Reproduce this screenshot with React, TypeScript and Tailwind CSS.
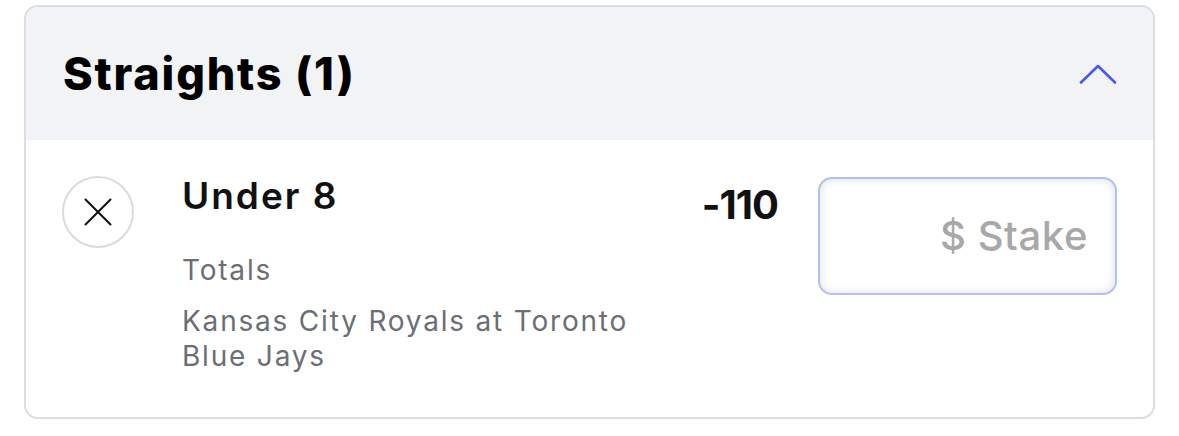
const font = { fontFamily: "Inter, 'Noto Sans', sans-serif" };

function Chevron() {
  return (
    <svg width="38" height="20" viewBox="0 0 38 20" fill="none" className="shrink-0">
      <path d="M2 18.5 L19 2 L36 18.5" stroke="#4359ef" strokeWidth="2.6" strokeLinecap="round" strokeLinejoin="round" />
    </svg>
  );
}

function CloseIcon() {
  return (
    <svg width="28" height="28" viewBox="0 0 28 28" fill="none">
      <path d="M1.5 1.5 L26.5 26.5 M26.5 1.5 L1.5 26.5" stroke="#111" strokeWidth="2" strokeLinecap="round" />
    </svg>
  );
}

function BetRow() {
  return (
    <div className="flex items-start pt-[37px] pb-[43px] pl-[36px] pr-[36px]">
      <button className="w-[72px] h-[72px] shrink-0 rounded-full border-2 border-[#d8dbe1] flex items-center justify-center -mt-[1px]">
        <CloseIcon />
      </button>
      <div className="flex-1 ml-[48px] -mt-[3px]">
        <div className="text-[37px] leading-[44px] font-semibold text-[#111] tracking-[2px]">Under 8</div>
        <div className="mt-[35px] text-[28px] leading-[35px] text-[#6b6e75] tracking-[1.8px]">Totals</div>
        <div className="mt-[16px] text-[28px] leading-[35px] text-[#6b6e75] tracking-[1.8px] max-w-[470px]">
          Kansas City Royals at Toronto Blue Jays
        </div>
      </div>
      <div className="text-[40px] leading-[48px] font-bold text-[#111] tracking-[-1px] mt-[4px] mr-[2px]">-110</div>
      <div className="ml-[38px] w-[299px] h-[118px] shrink-0 rounded-[14px] border-2 border-[#b5bcf6] bg-white shadow-[inset_0_0_10px_rgba(0,0,0,0.13)] flex items-center justify-end pr-[27px]">
        <span className="text-[40px] font-medium text-[#a8a8a8] tracking-[0.6px]">$ Stake</span>
      </div>
    </div>
  );
}

export default function App() {
  return (
    <div className="w-[1179px] h-[436px] bg-white pt-[5px] px-[24px]" style={font}>
      <div className="rounded-[14px] border-2 border-[#dadde3] overflow-hidden bg-white">
        <div className="h-[133px] bg-[#f2f3f5] flex items-center justify-between pl-[37px] pr-[36px]">
          <h2 className="text-[45px] font-extrabold text-black tracking-[1.8px]">Straights (1)</h2>
          <Chevron />
        </div>
        <BetRow />
      </div>
    </div>
  );
}
